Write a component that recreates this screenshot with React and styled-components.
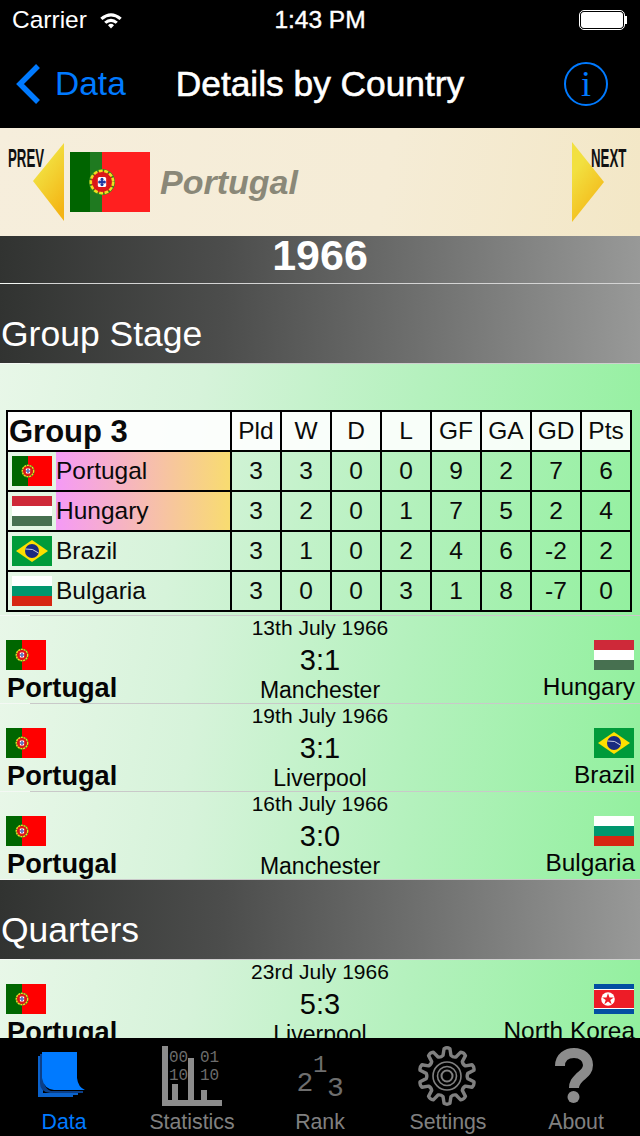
import React from "react";
import styled, { createGlobalStyle, css } from "styled-components";

const GlobalStyle = createGlobalStyle`
  html, body {
    margin: 0;
    padding: 0;
    background: #000;
  }
  body {
    font-family: "Liberation Sans", Arial, sans-serif;
  }
`;

const standings = [
  { code: "pt", name: "Portugal", top: true, stats: [3, 3, 0, 0, 9, 2, 7, 6] },
  { code: "hu", name: "Hungary", top: true, stats: [3, 2, 0, 1, 7, 5, 2, 4] },
  { code: "br", name: "Brazil", stats: [3, 1, 0, 2, 4, 6, -2, 2] },
  { code: "bg", name: "Bulgaria", stats: [3, 0, 0, 3, 1, 8, -7, 0] },
];

const groupMatches = [
  { date: "13th July 1966", score: "3:1", venue: "Manchester", code: "hu", away: "Hungary" },
  { date: "19th July 1966", score: "3:1", venue: "Liverpool", code: "br", away: "Brazil" },
  { date: "16th July 1966", score: "3:0", venue: "Manchester", code: "bg", away: "Bulgaria" },
];

const columns = ["Pld", "W", "D", "L", "GF", "GA", "GD", "Pts"];

function Emblem({ cx, cy, r }) {
  const dot = r * 0.12;
  return (
    <g>
      <circle cx={cx} cy={cy} r={r * 0.92} fill="#d81818" stroke="#2f8a1c" strokeWidth={r * 0.16} />
      <circle
        cx={cx}
        cy={cy}
        r={r * 0.86}
        fill="none"
        stroke="#f0e020"
        strokeWidth={r * 0.2}
        strokeDasharray={`${r * 0.3} ${r * 0.12}`}
      />
      <rect x={cx - r * 0.48} y={cy - r * 0.56} width={r * 0.96} height={r * 1.1} rx={r * 0.22} fill="#e01818" />
      <rect x={cx - r * 0.32} y={cy - r * 0.38} width={r * 0.64} height={r * 0.76} rx={r * 0.12} fill="#fff" />
      <circle cx={cx} cy={cy - r * 0.2} r={dot} fill="#2038a0" />
      <circle cx={cx} cy={cy} r={dot} fill="#2038a0" />
      <circle cx={cx} cy={cy + r * 0.2} r={dot} fill="#2038a0" />
      <circle cx={cx - r * 0.18} cy={cy} r={dot} fill="#2038a0" />
      <circle cx={cx + r * 0.18} cy={cy} r={dot} fill="#2038a0" />
    </g>
  );
}

function Flag({ code }) {
  if (code === "pt") {
    return (
      <FlagSvg viewBox="0 0 40 30">
        <rect width="40" height="30" fill="#f00" />
        <rect width="16" height="30" fill="#060" />
        <Emblem cx={16} cy={15} r={6.6} />
      </FlagSvg>
    );
  }
  if (code === "hu") {
    return (
      <FlagSvg viewBox="0 0 40 30">
        <rect width="40" height="10" fill="#ce2939" />
        <rect y="10" width="40" height="10" fill="#fff" />
        <rect y="20" width="40" height="10" fill="#477050" />
      </FlagSvg>
    );
  }
  if (code === "br") {
    return (
      <FlagSvg viewBox="0 0 40 30">
        <rect width="40" height="30" fill="#009b3a" />
        <path d="M4 15 L20 4 L36 15 L20 26 Z" fill="#fedf00" />
        <circle cx="20" cy="15" r="7" fill="#1a2a80" />
        <path d="M13.5 13 Q21 12 26.5 17" stroke="#dde" strokeWidth="0.9" fill="none" />
      </FlagSvg>
    );
  }
  if (code === "bg") {
    return (
      <FlagSvg viewBox="0 0 40 30">
        <rect width="40" height="10" fill="#fff" />
        <rect y="10" width="40" height="10" fill="#00966e" />
        <rect y="20" width="40" height="10" fill="#d62612" />
      </FlagSvg>
    );
  }
  return (
    <FlagSvg viewBox="0 0 40 30">
      <rect width="40" height="30" fill="#024fa2" />
      <rect y="5" width="40" height="20" fill="#fff" />
      <rect y="6" width="40" height="18" fill="#ed1c27" />
      <circle cx="14" cy="15" r="6.8" fill="#fff" />
      <path d="M14 9.2 L15.5 13.4 L19.8 13.4 L16.3 16 L17.6 20.2 L14 17.6 L10.4 20.2 L11.7 16 L8.2 13.4 L12.5 13.4 Z" fill="#ed1c27" />
    </FlagSvg>
  );
}

function PrevArrow() {
  return (
    <ArrowSvg viewBox="0 0 32 78">
      <defs>
        <linearGradient id="prevFill" x1="0.3" y1="0.25" x2="0.7" y2="1">
          <stop offset="0" stopColor="#f2e040" />
          <stop offset="1" stopColor="#f4b414" />
        </linearGradient>
      </defs>
      <path d="M31 0 L31 78 L0 38 Z" fill="url(#prevFill)" />
    </ArrowSvg>
  );
}

function NextArrow() {
  return (
    <ArrowSvg viewBox="0 0 32 80">
      <defs>
        <linearGradient id="nextFill" x1="0.3" y1="0.25" x2="0.7" y2="1">
          <stop offset="0" stopColor="#f2e040" />
          <stop offset="1" stopColor="#f4b414" />
        </linearGradient>
      </defs>
      <path d="M0 0 L32 40 L0 80 Z" fill="url(#nextFill)" />
    </ArrowSvg>
  );
}

function DataIcon() {
  return (
    <svg width="56" height="60" viewBox="0 0 56 60">
      <path d="M2 10 H7 V47 H37 V51 H2 Z" fill="#0a62cc" />
      <path d="M4 8 H8 V36 Q9 43 15 45 H47 V47 H14 Q4 46 4 37 Z" fill="#0b3f88" />
      <path d="M10 47 H42 V49 H10 Z" fill="#0a62cc" />
      <path d="M6 6 H41 V32 Q42 41 49 44 H18 Q8 43 6 32 Z" fill="#007aff" />
    </svg>
  );
}

function StatsIcon() {
  return (
    <svg width="60" height="60" viewBox="0 0 60 60">
      <g fill="#8c8c8c">
        <rect x="0" y="0" width="6" height="60" />
        <rect x="0" y="54" width="60" height="6" />
        <rect x="10" y="38" width="6" height="17" />
        <rect x="26" y="12" width="6" height="43" />
        <rect x="39" y="44" width="6" height="11" />
      </g>
      <g fill="#6c6c6c" fontFamily="'Liberation Mono', monospace" fontSize="16">
        <text x="7" y="16">00</text>
        <text x="38" y="16">01</text>
        <text x="7" y="34">10</text>
        <text x="38" y="34">10</text>
      </g>
    </svg>
  );
}

function RankIcon() {
  return (
    <svg width="50" height="60" viewBox="0 0 50 60">
      <g fill="#6e6e6e" fontFamily="'Liberation Mono', monospace" fontSize="28">
        <text x="1.5" y="45">2</text>
        <text x="32" y="50">3</text>
      </g>
      <text x="18" y="26" fill="#6e6e6e" fontFamily="'Liberation Mono', monospace" fontSize="24">
        1
      </text>
    </svg>
  );
}

function gearPath(cx, cy, outer, inner, teeth) {
  const step = (Math.PI * 2) / teeth;
  const pts = [];
  for (let i = 0; i < teeth; i++) {
    const a = i * step - Math.PI / 2;
    const at = (ang, r) => `${(cx + Math.cos(ang) * r).toFixed(2)} ${(cy + Math.sin(ang) * r).toFixed(2)}`;
    pts.push(`${i === 0 ? "M" : "L"}${at(a - step * 0.17, outer)}`);
    pts.push(`Q${at(a, outer + 1.5)} ${at(a + step * 0.17, outer)}`);
    pts.push(`L${at(a + step * 0.3, inner)}`);
    pts.push(`Q${at(a + step * 0.5, inner - 1.5)} ${at(a + step * 0.7, inner)}`);
  }
  return pts.join(" ") + " Z";
}

function SettingsIcon() {
  return (
    <svg width="62" height="62" viewBox="0 0 62 62">
      <g fill="none" stroke="#808080">
        <path d={gearPath(30, 30, 27.5, 21, 10)} strokeWidth="3.4" strokeLinejoin="round" />
        <circle cx="30" cy="30" r="14" strokeWidth="1.6" />
        <circle cx="30" cy="30" r="9.5" strokeWidth="1.6" />
        <circle cx="30" cy="30" r="5.5" strokeWidth="2" />
      </g>
    </svg>
  );
}

function AboutIcon() {
  return (
    <svg width="42" height="62" viewBox="0 0 42 62">
      <path
        d="M5 20 C5 11 12 7 19 7 C27 7 33 12 33 19 C33 26 28 28 24 32 C21 35 19 37 19 42"
        fill="none"
        stroke="#8c8c8c"
        strokeWidth="10"
      />
      <circle cx="18.5" cy="51" r="6" fill="#8c8c8c" />
    </svg>
  );
}

const tabs = [
  { label: "Data", Icon: DataIcon, active: true },
  { label: "Statistics", Icon: StatsIcon },
  { label: "Rank", Icon: RankIcon },
  { label: "Settings", Icon: SettingsIcon },
  { label: "About", Icon: AboutIcon },
];

function MatchItem({ match }) {
  return (
    <MatchRow>
      <TeamHome>
        <Flag code="pt" />
        <HomeName>Portugal</HomeName>
      </TeamHome>
      <MatchInfo>
        <MatchDate>{match.date}</MatchDate>
        <Score>{match.score}</Score>
        <Venue>{match.venue}</Venue>
      </MatchInfo>
      <TeamAway>
        <Flag code={match.code} />
        <AwayName>{match.away}</AwayName>
      </TeamAway>
    </MatchRow>
  );
}

export default function App() {
  return (
    <Screen>
      <GlobalStyle />
      <StatusBar>
        <StatusLeft>
          Carrier
          <svg width="24" height="18" viewBox="0 0 28 20">
            <path d="M1.5 7.5 Q14 -3 26.5 7.5 L24 10 Q14 2 4 10 Z" fill="#fff" />
            <path d="M6 12 Q14 5 22 12 L19.5 14.5 Q14 10 8.5 14.5 Z" fill="#fff" />
            <path d="M10.5 16 Q14 13 17.5 16 L14 20 Z" fill="#fff" />
          </svg>
        </StatusLeft>
        <StatusTime>1:43 PM</StatusTime>
        <Battery>
          <BatteryBody />
          <BatteryTip />
        </Battery>
      </StatusBar>

      <NavBar>
        <BackLink>
          <svg width="26" height="40" viewBox="0 0 26 40">
            <path d="M23 2 L5 20 L23 38" fill="none" stroke="#007aff" strokeWidth="5.5" />
          </svg>
          Data
        </BackLink>
        <NavTitle>Details by Country</NavTitle>
        <InfoButton>i</InfoButton>
      </NavBar>

      <CountryBanner>
        <PrevBlock>
          <SmallCaps>PREV</SmallCaps>
          <PrevArrow />
        </PrevBlock>
        <BannerFlag viewBox="0 0 80 60">
          <rect width="80" height="60" fill="#ff1f1f" />
          <rect width="32" height="60" fill="#006400" />
          <rect x="20" width="12" height="60" fill="#1f7a20" />
          <Emblem cx={32} cy={30} r={13} />
        </BannerFlag>
        <CountryName>Portugal</CountryName>
        <NextBlock>
          <NextArrow />
          <NextLabel>NEXT</NextLabel>
        </NextBlock>
      </CountryBanner>

      <YearBar>1966</YearBar>

      <Content>
        <SectionHeader>Group Stage</SectionHeader>
        <GroupBlock>
          <StandingsTable>
            <HeadCell $name>Group 3</HeadCell>
            {columns.map((c) => (
              <HeadCell key={c}>{c}</HeadCell>
            ))}
            {standings.map((team) => (
              <React.Fragment key={team.name}>
                <NameCell>
                  <Flag code={team.code} />
                  <NameFill $top={team.top}>{team.name}</NameFill>
                </NameCell>
                {team.stats.map((s, i) => (
                  <StatCell key={i}>{s}</StatCell>
                ))}
              </React.Fragment>
            ))}
          </StandingsTable>
        </GroupBlock>

        {groupMatches.map((m) => (
          <MatchItem key={m.date} match={m} />
        ))}

        <SectionHeader>Quarters</SectionHeader>
        <MatchItem
          match={{ date: "23rd July 1966", score: "5:3", venue: "Liverpool", code: "kp", away: "North Korea" }}
        />
      </Content>

      <TabBar>
        {tabs.map(({ label, Icon, active }) => (
          <TabItem key={label} $active={active}>
            <TabIcon>
              <Icon />
            </TabIcon>
            <TabLabel>{label}</TabLabel>
          </TabItem>
        ))}
      </TabBar>
    </Screen>
  );
}

const rowGradient = "linear-gradient(100deg, #e8f7e8 0%, #d6f3da 30%, #b5f1be 62%, #92f09e 100%)";
const darkGradient = "linear-gradient(92deg, #313331 0%, #4c4d4c 35%, #6e6f6e 65%, #989998 100%)";

// hairline under a row, whiter over the first 30px
const rowEdge = css`
  position: relative;
  border-bottom: 1px solid #c9c9c9;
  &::after {
    content: "";
    position: absolute;
    left: 0;
    bottom: -1px;
    width: 30px;
    height: 1px;
    background: #f4f8f4;
  }
`;

const Screen = styled.div`
  width: 640px;
  height: 1136px;
  display: flex;
  flex-direction: column;
  overflow: hidden;
  background: #000;
`;

const StatusBar = styled.div`
  height: 40px;
  flex: none;
  display: grid;
  grid-template-columns: 1fr auto 1fr;
  align-items: center;
  padding: 0 12px;
  color: #fff;
  font-size: 24.5px;
`;

const StatusLeft = styled.div`
  display: flex;
  align-items: center;
  gap: 12px;
`;

const StatusTime = styled.div`
  font-size: 24.5px;
  -webkit-text-stroke: 0.4px #fff;
`;

const Battery = styled.div`
  display: flex;
  align-items: center;
  justify-content: flex-end;
  padding-right: 1px;
`;

const BatteryBody = styled.div`
  width: 42px;
  height: 16px;
  background: #fff;
  border-radius: 3px;
  outline: 1px solid #fff;
  outline-offset: 1px;
`;

const BatteryTip = styled.div`
  width: 2px;
  height: 8px;
  margin-left: 2px;
  background: #fff;
`;

const NavBar = styled.div`
  height: 88px;
  flex: none;
  display: grid;
  grid-template-columns: 1fr auto 1fr;
  align-items: center;
  padding: 0 32px 0 15px;
  color: #fff;
`;

const BackLink = styled.div`
  display: flex;
  align-items: center;
  gap: 14px;
  color: #007aff;
  font-size: 33.5px;
`;

const NavTitle = styled.div`
  font-size: 35.3px;
  margin-left: 17px;
  -webkit-text-stroke: 0.6px #fff;
  white-space: nowrap;
`;

const InfoButton = styled.div`
  justify-self: end;
  width: 44px;
  height: 44px;
  border: 2px solid #007aff;
  border-radius: 50%;
  box-sizing: border-box;
  display: flex;
  align-items: center;
  justify-content: center;
  color: #007aff;
  font-family: "Liberation Serif", serif;
  font-size: 36px;
`;

const CountryBanner = styled.div`
  height: 108px;
  flex: none;
  display: flex;
  align-items: center;
  background: linear-gradient(100deg, #f6eedc 0%, #f5ecd6 60%, #f3e7c6 100%);
`;

const PrevBlock = styled.div`
  width: 65px;
  height: 78px;
  flex: none;
  display: flex;
  justify-content: flex-end;
  position: relative;
`;

const NextBlock = styled.div`
  width: 68px;
  height: 80px;
  flex: none;
  position: relative;
  margin-left: auto;
`;

const ArrowSvg = styled.svg`
  width: 32px;
  height: 100%;
  display: block;
`;

const SmallCaps = styled.span`
  position: absolute;
  left: 8px;
  top: 3px;
  color: #111;
  font-size: 25px;
  font-weight: bold;
  line-height: 25px;
  transform: scaleX(0.53);
  transform-origin: left center;
`;

const NextLabel = styled(SmallCaps)`
  left: 19px;
  top: 4px;
`;

const BannerFlag = styled.svg`
  width: 80px;
  height: 60px;
  flex: none;
  margin: 0 10px 0 5px;
`;

const CountryName = styled.div`
  color: #8a8878;
  font-size: 34px;
  font-weight: bold;
  font-style: italic;
`;

const YearBar = styled.div`
  height: 47px;
  flex: none;
  background: ${darkGradient};
  color: #fff;
  font-size: 43px;
  font-weight: bold;
  line-height: 38px;
  text-align: center;
  ${rowEdge}
  border-bottom-color: #d4d4d4;
`;

const Content = styled.div`
  flex: 1;
  min-height: 0;
  overflow: hidden;
`;

const SectionHeader = styled.div`
  height: 71px;
  background: ${darkGradient};
  color: #fff;
  font-size: 35.5px;
  display: flex;
  align-items: flex-end;
  padding: 0 0 8px 1px;
  ${rowEdge}
  border-bottom-color: #cfcfcf;
`;

const GroupBlock = styled.div`
  height: 252px;
  background: ${rowGradient};
  padding: 46px 0 0 6px;
  box-sizing: border-box;
  ${rowEdge}
`;

const StandingsTable = styled.div`
  width: 626px;
  display: grid;
  grid-template-columns: 224px repeat(8, 50px);
  grid-auto-rows: 40px;
  border-top: 2px solid #000;
  border-left: 2px solid #000;
  box-sizing: border-box;
  color: #0a0a0a;
`;

const Cell = styled.div`
  border-right: 2px solid #000;
  border-bottom: 2px solid #000;
  box-sizing: border-box;
  display: flex;
  align-items: center;
  justify-content: center;
  font-size: 24.5px;
`;

const HeadCell = styled(Cell)`
  background: rgba(255, 255, 255, 0.9);
  justify-content: ${(p) => (p.$name ? "flex-start" : "center")};
  padding-left: ${(p) => (p.$name ? "1px" : "0")};
  padding-top: ${(p) => (p.$name ? "2px" : "0")};
  font-size: ${(p) => (p.$name ? "31px" : "24.5px")};
  font-weight: ${(p) => (p.$name ? "bold" : "normal")};
`;

const NameCell = styled(Cell)`
  justify-content: flex-start;
  padding-left: 4px;
  gap: 4px;
`;

const NameFill = styled.div`
  flex: 1;
  align-self: stretch;
  display: flex;
  align-items: center;
  background: ${(p) => (p.$top ? "linear-gradient(90deg, #f59af6, #f8dc70)" : "transparent")};
`;

const StatCell = styled(Cell)``;

const FlagSvg = styled.svg`
  width: 40px;
  height: 30px;
  flex: none;
  display: block;
`;

const MatchRow = styled.div`
  height: 88px;
  box-sizing: border-box;
  background: ${rowGradient};
  display: grid;
  grid-template-columns: 1fr auto 1fr;
  padding: 0 6px;
  color: #050505;
  ${rowEdge}
`;

const TeamHome = styled.div`
  display: flex;
  flex-direction: column;
  align-items: flex-start;
  padding-top: 24px;
`;

const TeamAway = styled(TeamHome)`
  align-items: flex-end;
`;

const HomeName = styled.div`
  font-size: 27.2px;
  font-weight: bold;
  line-height: 36px;
  margin-left: 1px;
`;

const AwayName = styled.div`
  font-size: 24.4px;
  line-height: 34px;
  margin-right: -1px;
  white-space: nowrap;
`;

const MatchInfo = styled.div`
  display: flex;
  flex-direction: column;
  align-items: center;
`;

const MatchDate = styled.div`
  font-size: 21px;
  line-height: 24px;
`;

const Score = styled.div`
  font-size: 29px;
  line-height: 37px;
  margin-top: 2px;
`;

const Venue = styled.div`
  font-size: 23px;
  line-height: 24px;
  margin-top: -1px;
`;

const TabBar = styled.div`
  height: 98px;
  flex: none;
  display: grid;
  grid-template-columns: repeat(5, 128px);
  background: #000;
`;

const TabItem = styled.div`
  display: flex;
  flex-direction: column;
  align-items: center;
  color: ${(p) => (p.$active ? "#007aff" : "#808080")};
`;

const TabIcon = styled.div`
  height: 72px;
  display: flex;
  align-items: flex-start;
  justify-content: center;
  padding-top: 8px;
  box-sizing: border-box;
`;

const TabLabel = styled.div`
  font-size: 21.3px;
  line-height: 24px;
`;
